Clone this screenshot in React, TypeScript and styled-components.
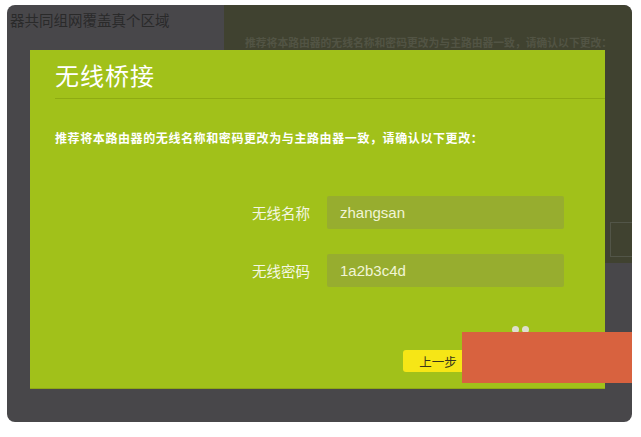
import React from 'react';
import styled, { createGlobalStyle } from 'styled-components';

const GlobalStyle = createGlobalStyle`
  html, body {
    margin: 0;
    padding: 0;
    background: #ffffff;
  }
  body {
    font-family: "Liberation Sans", "Noto Sans CJK SC", sans-serif;
  }
`;

const Frame = styled.div`
  position: relative;
  margin: 5px 0 0 7px;
  width: 625px;
  height: 417px;
  border-radius: 8px;
  overflow: hidden;
  background: #48474a;
  display: flex;
  align-items: flex-start;
`;

const PageSide = styled.div`
  width: 217px;
  padding: 6px 0 0 3px;
  box-sizing: border-box;
  font-size: 14.5px;
  line-height: 20px;
  color: #2a2a2a;
  white-space: nowrap;
`;

const PagePanel = styled.div`
  flex: 1;
  height: 258px;
  background: #404230;
  border-top-right-radius: 8px;
  padding: 30px 0 0 21px;
  box-sizing: border-box;
  display: flex;
  flex-direction: column;
`;

const PanelText = styled.div`
  font-size: 10.8px;
  font-weight: bold;
  line-height: 16px;
  color: #525444;
  white-space: nowrap;
`;

const PanelBox = styled.div`
  align-self: flex-end;
  margin-top: 171px;
  margin-right: -8px;
  width: 30px;
  height: 35px;
  border: 1px solid #525548;
  box-sizing: border-box;
`;

const Modal = styled.div`
  position: absolute;
  left: 23px;
  top: 45px;
  width: 575px;
  height: 338px;
  background: #a1c11a;
  box-shadow: 0 1px 0 #8fa816;
  display: flex;
  flex-direction: column;
`;

const Header = styled.div`
  margin-left: 25px;
  height: 48px;
  border-bottom: 1px solid #8eab12;
  display: flex;
  align-items: center;
`;

const Title = styled.h1`
  margin: 0;
  font-family: "Noto Sans CJK SC", sans-serif;
  font-size: 24px;
  font-weight: 400;
  color: #ffffff;
  letter-spacing: 1px;
`;

const Description = styled.p`
  margin: 29px 0 0 25px;
  font-family: "Noto Sans CJK SC", sans-serif;
  font-size: 12px;
  font-weight: bold;
  line-height: 20px;
  letter-spacing: 0.6px;
  color: #ffffff;
  white-space: nowrap;
`;

const Form = styled.div`
  margin-top: 48px;
  display: grid;
  grid-template-columns: 280px 237px;
  column-gap: 17px;
  row-gap: 25px;
  align-items: center;
`;

const Label = styled.div`
  text-align: right;
  font-family: "Noto Sans CJK SC", sans-serif;
  font-size: 14.5px;
  color: #f4f7e2;
`;

const Field = styled.div`
  height: 33px;
  border-radius: 2px;
  background: #97ad2f;
  padding-left: 13px;
  display: flex;
  align-items: center;
  font-size: 15px;
  color: #f1f5d6;
`;

const Actions = styled.div`
  margin-top: 63px;
  padding-left: 373px;
  display: flex;
`;

const BackButton = styled.button`
  width: 70px;
  height: 22px;
  border: none;
  border-radius: 3px;
  background: #f6e616;
  font-family: "Noto Sans CJK SC", sans-serif;
  font-size: 12.5px;
  color: #38361a;
  padding: 0;
`;

const Dots = styled.div`
  position: absolute;
  left: 505px;
  top: 321px;
  display: flex;
  gap: 3px;
`;

const Dot = styled.span`
  width: 7px;
  height: 7px;
  border-radius: 50%;
  background: #dedfcf;
`;

const Cover = styled.div`
  position: absolute;
  left: 455px;
  top: 327px;
  width: 170px;
  height: 51px;
  background: #d8623f;
`;

const message = '推荐将本路由器的无线名称和密码更改为与主路由器一致，请确认以下更改：';

export default function App() {
  return (
    <>
      <GlobalStyle />
      <Frame>
        <PageSide>器共同组网覆盖真个区域</PageSide>
        <PagePanel>
          <PanelText>{message}</PanelText>
          <PanelBox />
        </PagePanel>
        <Modal>
          <Header>
            <Title>无线桥接</Title>
          </Header>
          <Description>{message}</Description>
          <Form>
            <Label>无线名称</Label>
            <Field>zhangsan</Field>
            <Label>无线密码</Label>
            <Field>1a2b3c4d</Field>
          </Form>
          <Actions>
            <BackButton>上一步</BackButton>
          </Actions>
        </Modal>
        <Dots>
          <Dot />
          <Dot />
        </Dots>
        <Cover />
      </Frame>
    </>
  );
}
